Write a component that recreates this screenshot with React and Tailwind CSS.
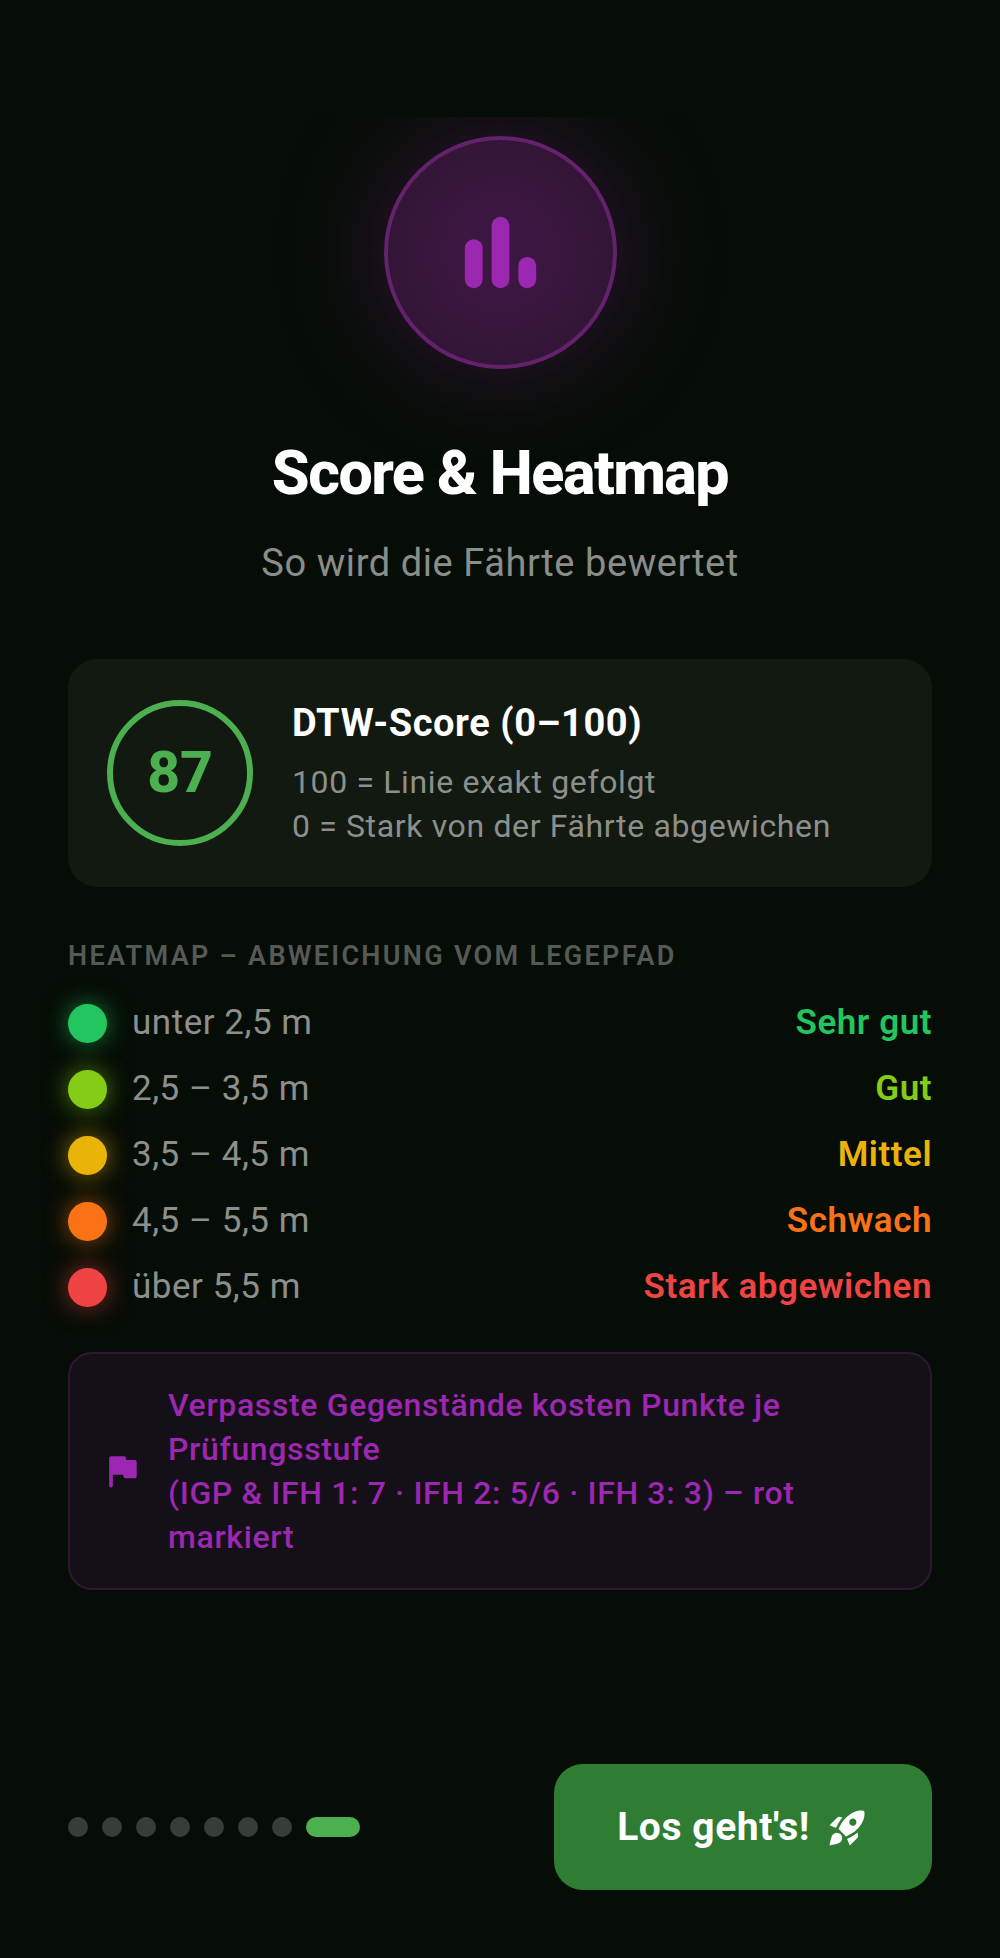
import { MdRocketLaunch } from 'react-icons/md';

const LEVELS = [
  {
    range: 'unter 2,5 m',
    label: 'Sehr gut',
    dot: 'bg-[#22c55e] shadow-[0_0_24px_rgba(34,197,94,0.6)]',
    text: 'text-[#22c55e]',
  },
  {
    range: '2,5 – 3,5 m',
    label: 'Gut',
    dot: 'bg-[#84cc16] shadow-[0_0_24px_rgba(132,204,22,0.6)]',
    text: 'text-[#84cc16]',
  },
  {
    range: '3,5 – 4,5 m',
    label: 'Mittel',
    dot: 'bg-[#eab308] shadow-[0_0_24px_rgba(234,179,8,0.6)]',
    text: 'text-[#eab308]',
  },
  {
    range: '4,5 – 5,5 m',
    label: 'Schwach',
    dot: 'bg-[#f97316] shadow-[0_0_24px_rgba(249,115,22,0.6)]',
    text: 'text-[#f97316]',
  },
  {
    range: 'über 5,5 m',
    label: 'Stark abgewichen',
    dot: 'bg-[#ef4444] shadow-[0_0_24px_rgba(239,68,68,0.6)]',
    text: 'text-[#ef4444]',
  },
];

const PAGES = 8;
const CURRENT_PAGE = 7;

function ChartBadge() {
  return (
    <div className="mx-auto flex size-[233px] items-center justify-center rounded-full border-4 border-[#64226d] bg-[radial-gradient(circle,#3c1741_25%,#331537_70%)] shadow-[0_0_98px_10px_rgba(156,39,176,0.25)]">
      <svg className="size-[107px] text-[#9c27b0]" viewBox="0 0 24 24" fill="currentColor" aria-hidden="true">
        <rect x="4" y="9" width="4" height="11" rx="2" />
        <rect x="10" y="4" width="4" height="16" rx="2" />
        <rect x="16" y="13" width="4" height="7" rx="2" />
      </svg>
    </div>
  );
}

function ScoreCard() {
  return (
    <section className="mt-[68px] flex items-center gap-[39px] rounded-[29px] bg-[#121911] p-[39px]">
      <div className="flex size-[146px] shrink-0 items-center justify-center rounded-full border-6 border-[#4caf50] text-[57px] leading-[60px] font-extrabold text-[#4caf50]">
        87
      </div>
      <div>
        <h2 className="text-[38px] leading-[50px] font-bold tracking-[0.015em] text-white">DTW-Score (0–100)</h2>
        <p className="mt-3 text-[32px] leading-[44px] tracking-[0.02em] text-[#8c908c]">
          100 = Linie exakt gefolgt
          <br />
          0 = Stark von der Fährte abgewichen
        </p>
      </div>
    </section>
  );
}

function Heatmap() {
  return (
    <section className="mt-[49px]">
      <h2 className="text-[27px] leading-[40px] font-semibold tracking-[0.085em] text-[#565a56] uppercase">
        Heatmap – Abweichung vom Legepfad
      </h2>
      <dl className="mt-[26px] flex flex-col gap-6">
        {LEVELS.map((level) => (
          <div key={level.label} className="flex items-center">
            <span className={`size-[39px] shrink-0 rounded-full ${level.dot}`} />
            <dt className="ml-[25px] text-[35px] leading-[42px] tracking-[0.015em] text-[#8c8f8c]">{level.range}</dt>
            <dd className={`ml-auto text-[35px] leading-[42px] font-semibold tracking-[0.015em] ${level.text}`}>
              {level.label}
            </dd>
          </div>
        ))}
      </dl>
    </section>
  );
}

function Hint() {
  return (
    <section className="mt-11 flex items-center gap-6 rounded-[24px] border-2 border-[#2f1733] bg-[#150f17] px-[30px] py-[29px] text-[#9c27b0]">
      <svg className="size-11 shrink-0" viewBox="0 0 24 24" fill="currentColor" aria-hidden="true">
        <path d="M14.4 6l-.24-1.2c-.09-.46-.5-.8-.98-.8H6c-.55 0-1 .45-1 1v15c0 .55.45 1 1 1s1-.45 1-1v-6h5.6l.24 1.2c.09.47.5.8.98.8H19c.55 0 1-.45 1-1V7c0-.55-.45-1-1-1h-4.6z" />
      </svg>
      <p className="text-[32px] leading-[44px] font-medium tracking-[0.02em]">
        Verpasste Gegenstände kosten Punkte je Prüfungsstufe
        <br />
        (IGP &amp; IFH 1: 7 · IFH 2: 5/6 · IFH 3: 3) – rot markiert
      </p>
    </section>
  );
}

function Footer() {
  return (
    <footer className="flex items-center justify-between px-[68px] pb-[68px]">
      <div className="flex gap-[14px]" role="img" aria-label={`Seite ${CURRENT_PAGE + 1} von ${PAGES}`}>
        {Array.from({ length: PAGES }, (_, i) => (
          <span
            key={i}
            className={i === CURRENT_PAGE ? 'h-5 w-[54px] rounded-full bg-[#4caf50]' : 'size-5 rounded-full bg-[#373d37]'}
          />
        ))}
      </div>
      <button
        type="button"
        className="flex h-[126px] items-center gap-4 rounded-[29px] bg-[#2e7d32] px-[63px] text-[39px] font-bold tracking-[0.015em] text-white"
      >
        Los geht's!
        <MdRocketLaunch className="size-[43px]" aria-hidden="true" />
      </button>
    </footer>
  );
}

export default function App() {
  return (
    <div className="flex min-h-screen flex-col bg-[#060d06] pt-[117px] font-['Roboto',sans-serif]">
      <main className="flex-1 overflow-hidden px-[68px] pt-[19px] pb-10">
        <ChartBadge />
        <h1 className="mt-[68px] text-center text-[61px] leading-[72px] font-extrabold tracking-tight text-white">
          Score &amp; Heatmap
        </h1>
        <p className="mt-[26px] text-center text-[38px] leading-[56px] tracking-[0.015em] text-[#8a8d8a]">
          So wird die Fährte bewertet
        </p>
        <ScoreCard />
        <Heatmap />
        <Hint />
      </main>
      <Footer />
    </div>
  );
}
